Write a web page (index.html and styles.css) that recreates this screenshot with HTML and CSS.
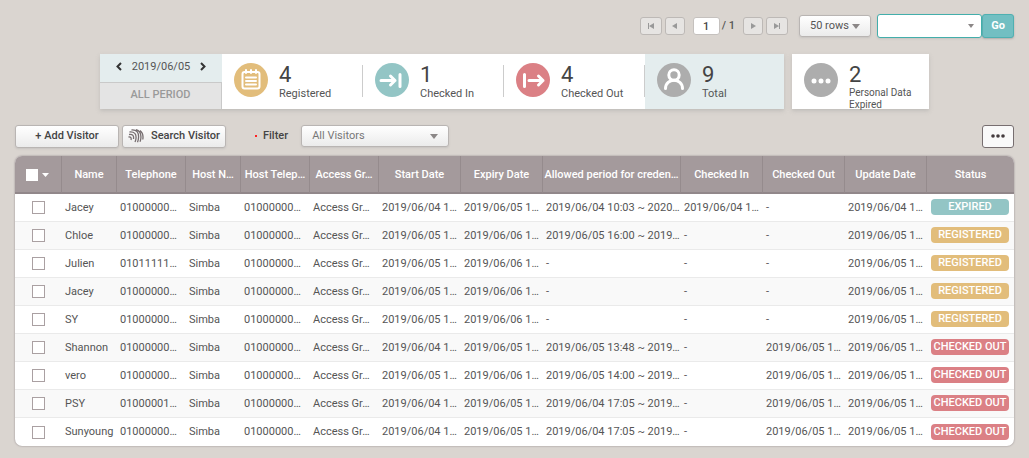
FILE: index.html
```
<!DOCTYPE html>
<html lang="en">
<head>
<meta charset="utf-8">
<title>Visitors</title>
<link rel="stylesheet" href="styles.css">
</head>
<body>
<main class="page">
  <nav class="pager" aria-label="Pages">
    <button class="page-btn" aria-label="First page"><svg width="8" height="8" viewBox="0 0 8 8"><path d="M1 1h1v6H1zM7 1v6L2 4z"/></svg></button>
    <button class="page-btn page-btn-prev" aria-label="Previous page"><svg width="8" height="8" viewBox="0 0 8 8"><path d="M6 1v6L1 4z"/></svg></button>
    <input class="page-no" aria-label="Page number" value="1">
    <span class="page-total">/ 1</span>
    <button class="page-btn page-btn-next" aria-label="Next page"><svg width="8" height="8" viewBox="0 0 8 8"><path d="M2 1v6l5-3z"/></svg></button>
    <button class="page-btn" aria-label="Last page"><svg width="8" height="8" viewBox="0 0 8 8"><path d="M1 1v6l5-3zM6 1h1v6H6z"/></svg></button>
    <span class="select rows"><select aria-label="Rows per page"><option>50 rows</option></select><svg class="caret" width="8" height="5" viewBox="0 0 8 5"><path d="M0 0h8L4 5z"/></svg></span>
    <span class="select search"><select aria-label="Search"><option></option></select><svg class="caret" width="6" height="4" viewBox="0 0 6 4"><path d="M0 0h6L3 4z"/></svg></span>
    <button class="go">Go</button>
  </nav>

  <section class="summary">
    <div class="card totals">
      <div class="period">
        <div class="date">
          <button class="arrow" aria-label="Previous day"><svg width="6" height="9" viewBox="0 0 6 9"><path d="M5 1L1.500 4.500 5 8"/></svg></button>
          <span>2019/06/05</span>
          <button class="arrow" aria-label="Next day"><svg width="6" height="9" viewBox="0 0 6 9"><path d="M1 1l3.500 3.500L1 8"/></svg></button>
        </div>
        <button class="all">ALL PERIOD</button>
      </div>
      <div class="stat split">
        <svg class="disc gold" width="34" height="34" viewBox="0 0 34 34"><circle cx="17" cy="17" r="17"/><rect class="line" x="8.500" y="9" width="17" height="16.500" rx="2"/><path class="line" d="M12 7V10M17 7V10M22 7V10"/><path class="thin" d="M12 14.500h10M12 18h10M12 21.500h10"/></svg>
        <div><div class="num">4</div><div class="label">Registered</div></div>
      </div>
      <div class="stat split">
        <svg class="disc teal" width="34" height="34" viewBox="0 0 34 34"><circle cx="17" cy="17" r="17"/><path class="bold" d="M6 17.500h14M15.500 13l4.500 4.500-4.500 4.500M25 11.500v12"/></svg>
        <div><div class="num">1</div><div class="label">Checked In</div></div>
      </div>
      <div class="stat split">
        <svg class="disc red" width="34" height="34" viewBox="0 0 34 34"><circle cx="17" cy="17" r="17"/><path class="bold" d="M13 17.500h14M22.500 13l4.500 4.500-4.500 4.500M8.500 11.500v12"/></svg>
        <div><div class="num">4</div><div class="label">Checked Out</div></div>
      </div>
      <div class="stat total">
        <svg class="disc grey" width="34" height="34" viewBox="0 0 34 34"><circle cx="17" cy="17" r="17"/><circle class="bold" cx="17" cy="12" r="5.200"/><path class="bold" d="M8.500 25.500c0-11 17-11 17 0"/></svg>
        <div><div class="num">9</div><div class="label">Total</div></div>
      </div>
    </div>
    <div class="card stat expired">
      <svg class="disc grey" width="34" height="34" viewBox="0 0 34 34"><circle cx="17" cy="17" r="17"/><g class="dots"><circle cx="10" cy="18" r="2.500"/><circle cx="17" cy="18" r="2.500"/><circle cx="24" cy="18" r="2.500"/></g></svg>
      <div><div class="num">2</div><div class="label label-two">Personal Data<br>Expired</div></div>
    </div>
  </section>

  <div class="tools">
    <button class="btn">+ Add Visitor</button>
    <button class="btn"><svg class="finger" width="16" height="14" viewBox="0 0 16 14"><path d="M1 5.500C5 5 6 7 5.500 10M.5 8c2.500-.3 3 1 2.500 3M1.500 3C6.500 2.500 8.500 5 8 9.500 7.900 11 7.500 12 7 13M3.500 1C9 .5 11 4 10.500 9c-.1 1.500-.5 3-1 4.200M8 .6C12 1.800 13.200 5 12.900 9c-.1 1.500-.4 2.500-.9 3.700M12 1.500c2.500 2 3.500 5 2.800 9"/></svg>Search Visitor</button>
    <label class="filter" for="filter">Filter</label>
    <span class="select visitors"><select id="filter"><option>All Visitors</option></select><svg class="caret" width="8" height="5" viewBox="0 0 8 5"><path d="M0 0h8L4 5z"/></svg></span>
    <button class="more" aria-label="More"><svg width="14" height="4" viewBox="0 0 14 4"><circle cx="2" cy="2" r="1.800"/><circle cx="7" cy="2" r="1.800"/><circle cx="12" cy="2" r="1.800"/></svg></button>
  </div>

  <div class="frame">
  <table class="grid">
    <colgroup><col class="w-check"><col class="w-short"><col class="w-mid"><col class="w-short"><col class="w-mid"><col class="w-mid"><col class="w-date"><col class="w-date"><col class="w-long"><col class="w-date"><col class="w-date"><col class="w-date"><col></colgroup>
    <thead>
      <tr><th class="pick"><input class="box" type="checkbox" aria-label="Select all"><svg class="tri" width="8" height="4" viewBox="0 0 8 4"><path d="M0 0h7L3.500 4z"/></svg></th><th>Name</th><th>Telephone</th><th>Host N…</th><th>Host Telep…</th><th>Access Gr…</th><th>Start Date</th><th>Expiry Date</th><th>Allowed period for creden…</th><th>Checked In</th><th>Checked Out</th><th>Update Date</th><th>Status</th></tr>
    </thead>
    <tbody>
      <tr><td class="pick"><input class="box" type="checkbox" aria-label="Jacey"></td><td>Jacey</td><td>01000000…</td><td>Simba</td><td>01000000…</td><td>Access Gr…</td><td>2019/06/04 1…</td><td>2019/06/05 1…</td><td>2019/06/04 10:03 ~ 2020…</td><td>2019/06/04 1…</td><td>-</td><td>2019/06/04 1…</td><td class="state"><span class="tag teal">EXPIRED</span></td></tr>
      <tr><td class="pick"><input class="box" type="checkbox" aria-label="Chloe"></td><td>Chloe</td><td>01000000…</td><td>Simba</td><td>01000000…</td><td>Access Gr…</td><td>2019/06/05 1…</td><td>2019/06/06 1…</td><td>2019/06/05 16:00 ~ 2019…</td><td>-</td><td>-</td><td>2019/06/05 1…</td><td class="state"><span class="tag gold">REGISTERED</span></td></tr>
      <tr><td class="pick"><input class="box" type="checkbox" aria-label="Julien"></td><td>Julien</td><td>01011111…</td><td>Simba</td><td>01000000…</td><td>Access Gr…</td><td>2019/06/05 1…</td><td>2019/06/06 1…</td><td>-</td><td>-</td><td>-</td><td>2019/06/05 1…</td><td class="state"><span class="tag gold">REGISTERED</span></td></tr>
      <tr><td class="pick"><input class="box" type="checkbox" aria-label="Jacey"></td><td>Jacey</td><td>01000000…</td><td>Simba</td><td>01000000…</td><td>Access Gr…</td><td>2019/06/05 1…</td><td>2019/06/06 1…</td><td>-</td><td>-</td><td>-</td><td>2019/06/05 1…</td><td class="state"><span class="tag gold">REGISTERED</span></td></tr>
      <tr><td class="pick"><input class="box" type="checkbox" aria-label="SY"></td><td>SY</td><td>01000000…</td><td>Simba</td><td>01000000…</td><td>Access Gr…</td><td>2019/06/05 1…</td><td>2019/06/06 1…</td><td>-</td><td>-</td><td>-</td><td>2019/06/05 1…</td><td class="state"><span class="tag gold">REGISTERED</span></td></tr>
      <tr><td class="pick"><input class="box" type="checkbox" aria-label="Shannon"></td><td>Shannon</td><td>01000000…</td><td>Simba</td><td>01000000…</td><td>Access Gr…</td><td>2019/06/04 1…</td><td>2019/06/05 1…</td><td>2019/06/05 13:48 ~ 2019…</td><td>-</td><td>2019/06/05 1…</td><td>2019/06/05 1…</td><td class="state"><span class="tag red">CHECKED OUT</span></td></tr>
      <tr><td class="pick"><input class="box" type="checkbox" aria-label="vero"></td><td>vero</td><td>01000000…</td><td>Simba</td><td>01000000…</td><td>Access Gr…</td><td>2019/06/05 1…</td><td>2019/06/06 1…</td><td>2019/06/05 14:00 ~ 2019…</td><td>-</td><td>2019/06/05 1…</td><td>2019/06/05 1…</td><td class="state"><span class="tag red">CHECKED OUT</span></td></tr>
      <tr><td class="pick"><input class="box" type="checkbox" aria-label="PSY"></td><td>PSY</td><td>01000001…</td><td>Simba</td><td>01000000…</td><td>Access Gr…</td><td>2019/06/04 1…</td><td>2019/06/05 1…</td><td>2019/06/04 17:05 ~ 2019…</td><td>-</td><td>2019/06/05 1…</td><td>2019/06/05 1…</td><td class="state"><span class="tag red">CHECKED OUT</span></td></tr>
      <tr><td class="pick"><input class="box" type="checkbox" aria-label="Sunyoung"></td><td>Sunyoung</td><td>01000000…</td><td>Simba</td><td>01000000…</td><td>Access Gr…</td><td>2019/06/04 1…</td><td>2019/06/05 1…</td><td>2019/06/04 17:05 ~ 2019…</td><td>-</td><td>2019/06/05 1…</td><td>2019/06/05 1…</td><td class="state"><span class="tag red">CHECKED OUT</span></td></tr>
    </tbody>
  </table>
  </div>
</main>
</body>
</html>
```

FILE: styles.css
```
* { box-sizing: border-box; }
body { margin: 0; background: #dad5d0; color: #555; font: 11px/14px Roboto, sans-serif; }
button, input, select { font: inherit; color: inherit; margin: 0; padding: 0; }
svg { display: block; flex: none; }
.page { padding: 14px 15px 13px; }

.pager { display: flex; justify-content: flex-end; align-items: center; height: 24px; }
.page-btn { width: 22px; height: 18px; display: flex; align-items: center; justify-content: center; background: #e6e4e2; border: 1px solid #bdb9b6; border-radius: 3px; fill: #999; }
.page-btn-prev { width: 20px; margin: 0 8px 0 3px; }
.page-btn-next { width: 20px; margin: 0 3px 0 8px; }
.page-no { width: 27px; height: 18px; text-align: center; font-weight: 500; background: #fff; border: 1px solid #c5c1be; border-radius: 3px; color: #444; }
.page-total { margin-left: 2px; font-weight: 500; }

.select { display: inline-flex; align-items: center; position: relative; }
.select select { appearance: none; width: 100%; height: 22px; padding: 0 10px; border: 1px solid #b9b5b3; border-radius: 3px; background: linear-gradient(#fff, #ebebeb); box-shadow: 0 1px 2px #aaa6; }
.caret { position: absolute; right: 11px; fill: #8b8787; pointer-events: none; }
.rows { width: 72px; margin: 0 6px 0 11px; }
.search { width: 105px; }
.search select { height: 24px; background: #fff; border-color: #43aeab; }
.search .caret { right: 8px; }
.go { width: 32px; height: 24px; border: 1px solid #4fb0b1; border-radius: 3px; background: #72bfc2; color: #fff; font-weight: 700; box-shadow: 0 1px 2px #8888; }

.summary { display: flex; gap: 8px; margin: 16px 0 15px 85px; }
.card { background: #fff; box-shadow: 0 2px 4px #9996; }
.totals { display: flex; height: 55px; }
.period { width: 122px; display: flex; flex-direction: column; }
.date { height: 28px; padding: 0 16px 3px; display: flex; align-items: center; justify-content: space-between; background: #e4edee; }
.arrow { border: 0; background: none; }
.arrow svg { fill: none; stroke: #333; stroke-width: 2; }
.all { flex: 1; padding-bottom: 3px; border: solid #c9c9c9; border-width: 1px 1px 0 0; background: #e4e4e4; color: #999; font-weight: 500; }
.stat { display: flex; align-items: flex-start; gap: 11px; width: 141px; height: 55px; padding: 9px 0 0 12px; position: relative; }
.split::after { content: ""; position: absolute; right: 0; top: 11px; height: 32px; width: 1px; background: #ccc; }
.total { background: #e4edee; width: 139px; }
.expired { width: 137px; }
.num { font-size: 22px; line-height: 24px; color: #444; }
.label { line-height: 14px; }
.label-two { font-size: 10px; line-height: 12px; }
.disc { --c: #adadad; fill: var(--c); }
.disc.gold { --c: #e2bd7b; }
.disc.teal { --c: #93c5c5; }
.disc.red { --c: #db8085; }
.disc .line, .disc .thin, .disc .bold { fill: none; stroke: #fff; stroke-width: 2; stroke-linecap: round; stroke-linejoin: round; }
.disc .bold { stroke-width: 3; }
.disc .dots { fill: #fff; }

.tools { display: flex; align-items: center; gap: 3px; margin-bottom: 8px; height: 24px; }
.btn { width: 104px; height: 23px; display: flex; align-items: center; justify-content: center; gap: 7px; border: 1px solid #b9b5b3; border-radius: 3px; background: linear-gradient(#fff, #ebebeb); color: #444; font-weight: 500; box-shadow: 0 1px 2px #aaa6; }
.finger { fill: none; stroke: #776e70; stroke-width: 1.300; }
.filter { display: flex; align-items: center; gap: 6px; margin: 0 10px 0 26px; font-weight: 500; color: #444; }
.filter::before { content: ""; width: 2px; height: 2px; background: #f22; }
.visitors { width: 148px; }
.visitors select { color: #777; }
.more { width: 32px; height: 23px; margin-left: auto; display: flex; align-items: center; justify-content: center; border: 1px solid #776e70; border-radius: 3px; background: #f9f9f9; fill: #443c3e; }

.frame { border-radius: 7px; overflow: hidden; background: #fff; box-shadow: 0 0 2px #887f80; }
.grid { width: 100%; table-layout: fixed; border-collapse: separate; border-spacing: 0; }
.w-check { width: 46px; }
.w-short { width: 55px; }
.w-mid { width: 69px; }
.w-date { width: 82px; }
.w-long { width: 138px; }
th { height: 38px; padding: 2px 0 0; background: #a49a9c; border-left: 1px solid #958b8d; border-bottom: 2px solid #91878a; color: #fff; font-weight: 500; text-align: center; white-space: nowrap; }
th:first-child { border-left: 0; }
td { height: 28px; padding: 0 0 0 4px; border-bottom: 1px solid #eaeaea; white-space: nowrap; }
tr:nth-child(even) td { background: #f9f9f9; }
tr:last-child td { border-bottom: 0; }
td.pick { padding: 0; text-align: center; }
.box { appearance: none; width: 13px; height: 13px; border: 1px solid #aaa0a2; background: #fff; vertical-align: middle; }
th .box { width: 12px; height: 12px; border: 0; }
.tri { display: inline-block; margin-left: 4px; fill: #fff; vertical-align: middle; }
td.state { padding: 0 5px 1px; }
.tag { display: block; height: 16px; line-height: 16px; border-radius: 4px; color: #fff; text-align: center; font-weight: 500; }
.tag.gold { background: #e2bd7b; }
.tag.teal { background: #93c5c5; }
.tag.red { background: #db8085; }
```
